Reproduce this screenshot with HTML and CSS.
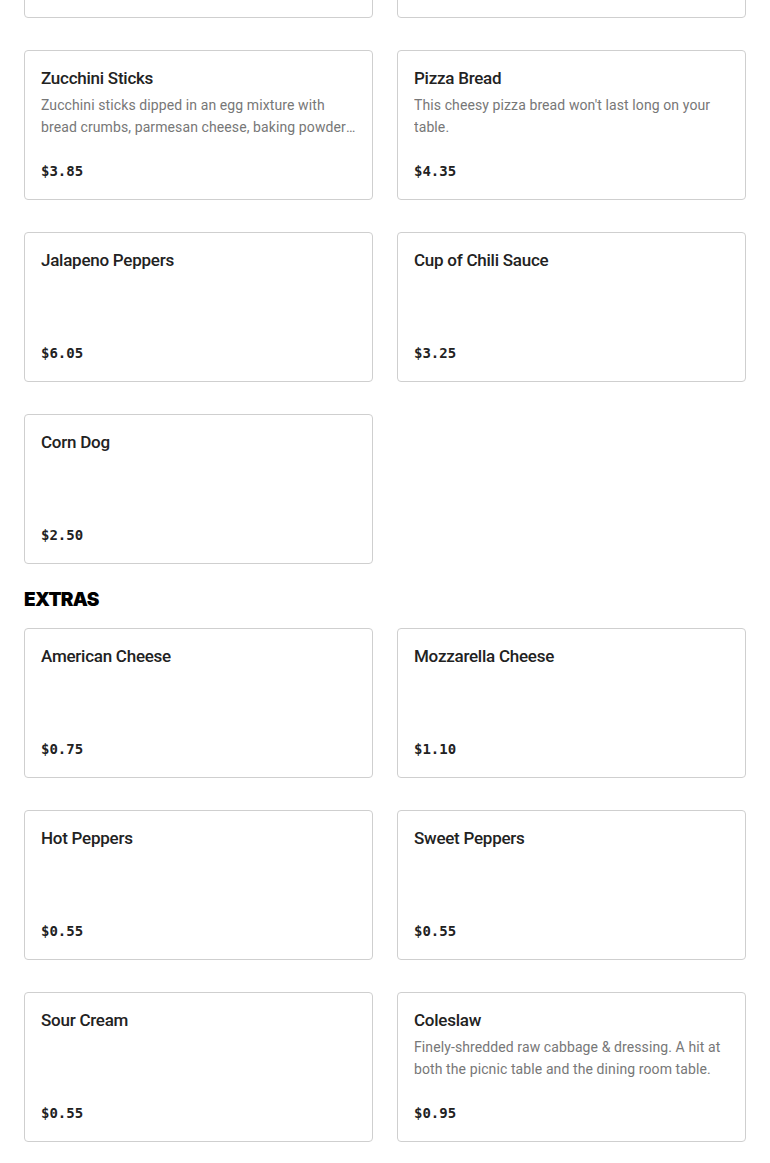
FILE: index.html
```html
<!DOCTYPE html>
<html lang="en">
<head>
    <meta charset="UTF-8">
    <meta name="viewport" content="width=device-width, initial-scale=1.0">
    <title>Menu</title>
    <link rel="stylesheet" href="styles.css">
</head>
<body>
    <div class="menu">
        <section class="menu-section menu-section-cut">
            <div class="menu-grid">
                <div class="menu-item">
                    <h3 class="item-name">Onion Rings</h3>
                    <p class="item-desc"></p>
                    <p class="item-price">$4.15</p>
                </div>
                <div class="menu-item">
                    <h3 class="item-name">Cheese Sticks</h3>
                    <p class="item-desc"></p>
                    <p class="item-price">$4.15</p>
                </div>

                <div class="menu-item">
                    <h3 class="item-name">Zucchini Sticks</h3>
                    <p class="item-desc">
                        <span class="desc-line">Zucchini sticks dipped in an egg mixture with</span>
                        <span class="desc-line">bread crumbs, parmesan cheese, baking powder and spices, then fried golden brown.</span>
                    </p>
                    <p class="item-price">$3.85</p>
                </div>
                <div class="menu-item">
                    <h3 class="item-name">Pizza Bread</h3>
                    <p class="item-desc">This cheesy pizza bread won't last long on your table.</p>
                    <p class="item-price">$4.35</p>
                </div>

                <div class="menu-item">
                    <h3 class="item-name">Jalapeno Peppers</h3>
                    <p class="item-desc"></p>
                    <p class="item-price">$6.05</p>
                </div>
                <div class="menu-item">
                    <h3 class="item-name">Cup of Chili Sauce</h3>
                    <p class="item-desc"></p>
                    <p class="item-price">$3.25</p>
                </div>

                <div class="menu-item">
                    <h3 class="item-name">Corn Dog</h3>
                    <p class="item-desc"></p>
                    <p class="item-price">$2.50</p>
                </div>
            </div>
        </section>

        <section class="menu-section">
            <h2 class="section-title">EXTRAS</h2>
            <div class="menu-grid">
                <div class="menu-item">
                    <h3 class="item-name">American Cheese</h3>
                    <p class="item-desc"></p>
                    <p class="item-price">$0.75</p>
                </div>
                <div class="menu-item">
                    <h3 class="item-name">Mozzarella Cheese</h3>
                    <p class="item-desc"></p>
                    <p class="item-price">$1.10</p>
                </div>

                <div class="menu-item">
                    <h3 class="item-name">Hot Peppers</h3>
                    <p class="item-desc"></p>
                    <p class="item-price">$0.55</p>
                </div>
                <div class="menu-item">
                    <h3 class="item-name">Sweet Peppers</h3>
                    <p class="item-desc"></p>
                    <p class="item-price">$0.55</p>
                </div>

                <div class="menu-item">
                    <h3 class="item-name">Sour Cream</h3>
                    <p class="item-desc"></p>
                    <p class="item-price">$0.55</p>
                </div>
                <div class="menu-item">
                    <h3 class="item-name">Coleslaw</h3>
                    <p class="item-desc">Finely-shredded raw cabbage &amp; dressing. A hit at both the picnic table and the dining room table.</p>
                    <p class="item-price">$0.95</p>
                </div>
            </div>
        </section>
    </div>
</body>
</html>
```

FILE: styles.css
```css
body {
    margin: 0;
    background-color: #fff;
    font-family: 'Roboto', 'Liberation Sans', sans-serif;
    color: #222;
    overflow: hidden;
}

.menu {
    padding: 0 24px;
    margin-top: -132px;
}

.menu-section-cut {
    margin-bottom: 24px;
}

.section-title {
    font-family: 'Inter', 'Liberation Sans', sans-serif;
    font-size: 19px;
    font-weight: 900;
    line-height: 24px;
    color: #000;
    margin: 0 0 16px;
    letter-spacing: -0.7px;
}

.menu-grid {
    display: grid;
    grid-template-columns: repeat(2, minmax(0, 1fr));
    column-gap: 24px;
    row-gap: 32px;
}

.menu-item {
    min-width: 0;
    border: 1px solid #cfcfcf;
    border-radius: 4px;
    padding: 15px 16px 18px;
    display: flex;
    flex-direction: column;
}

.item-name {
    font-size: 17px;
    font-weight: 500;
    line-height: 24px;
    margin: 0 0 4px;
    color: #222;
    letter-spacing: -0.25px;
}

.item-desc {
    font-size: 14px;
    line-height: 22px;
    height: 44px;
    margin: 0;
    color: #777;
    letter-spacing: 0.1px;
    display: -webkit-box;
    -webkit-line-clamp: 2;
    -webkit-box-orient: vertical;
    overflow: hidden;
}

.desc-line {
    display: block;
    white-space: nowrap;
    overflow: hidden;
    text-overflow: ellipsis;
}

.item-price {
    font-family: 'DejaVu Sans Mono', monospace;
    font-size: 14px;
    font-weight: bold;
    line-height: 20px;
    margin: 23px 0 0;
    color: #222;
}
```
